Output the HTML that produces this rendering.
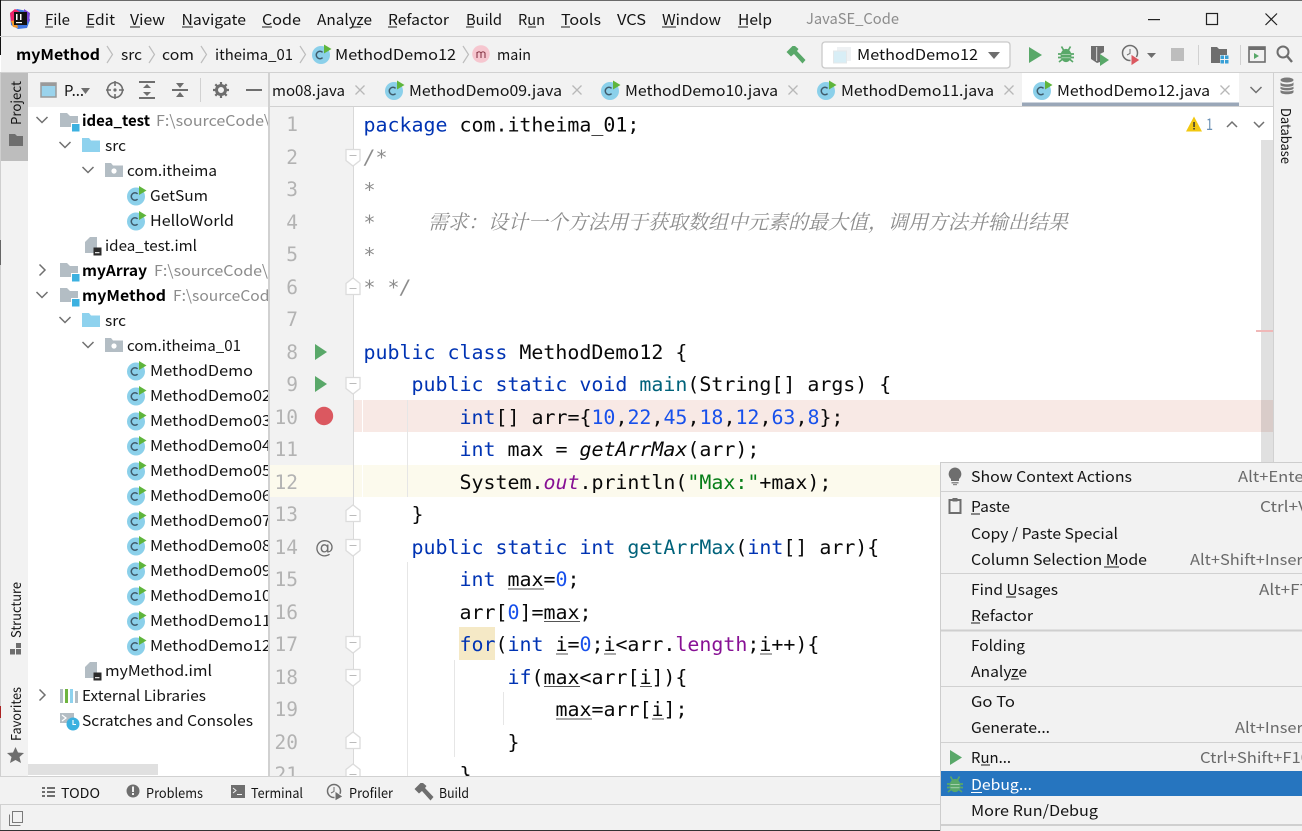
<!DOCTYPE html>
<html><head><meta charset="utf-8"><title>JavaSE_Code</title>
<style>
html,body{margin:0;padding:0;background:#f2f2f2;width:1302px;height:831px;overflow:hidden}
svg{display:block}
text{font-family:"Noto Sans CJK SC","Liberation Sans",sans-serif;font-size:15px;fill:#141414;white-space:pre}
.b{font-weight:700;fill:#000}
.g{fill:#8c8c8c}
.s{fill:#6a6a6a}
.sm{font-size:13.5px}
.c{font-family:"DejaVu Sans Mono","Liberation Mono",monospace;font-size:19.93px;fill:#080808}
.k{fill:#0033b3}.n{fill:#1750eb}.st{fill:#067d17}.f{fill:#871094}.d{fill:#00627a}.i{font-style:italic}.cm{fill:#8c8c8c;font-style:italic}
.ln{font-family:"DejaVu Sans Mono","Liberation Mono",monospace;font-size:19.5px;fill:#b3b3b3;text-anchor:end}
.cn{font-family:"Noto Serif CJK SC","Noto Sans CJK SC",serif;font-size:20px;font-style:italic;fill:#8c8c8c}
.ch{fill:none;stroke:#707070;stroke-width:1.5}
.nv{fill:none;stroke:#bdbdbd;stroke-width:1.2}
.x{fill:none;stroke:#b8b8b8;stroke-width:1.3}
.u{fill:#1c1c1c}
.vu{fill:#555}
.gd{fill:#e6e6e6}
</style></head><body>
<svg width="1302" height="831" viewBox="0 0 1302 831" xmlns="http://www.w3.org/2000/svg">
<defs>
<g id="ci"><circle cx="0" cy="0" r="9" fill="#8bd0ea"/><path d="M1.6,-2.6A3.7,3.7 0 1 0 1.6,2.6" fill="none" stroke="#3f5b6b" stroke-width="1.5"/><path d="M3,-10.5L10.5,-6L3,-1.5Z" fill="#5fb53c"/></g>
<g id="mod"><path d="M0,0H7L10,3H18V14H0Z" fill="#b3bdc4"/><rect x="12" y="11" width="7.5" height="7.5" fill="#3cb1e0"/><rect x="11" y="10" width="1" height="8.5" fill="#fff"/><rect x="11" y="10" width="8.5" height="1" fill="#fff"/></g>
<g id="src"><path d="M0,0H7L9,2.5H18V14H0Z" fill="#8ed2ee"/></g>
<g id="pkg"><path d="M0,0H6L8,2.5H18V14H0Z" fill="#b3bdc4"/><circle cx="9" cy="8" r="2.6" fill="#fff"/></g>
<g id="iml"><path d="M0,5L5,0H12V16H0Z" fill="#b3bdc4"/><rect x="8.5" y="10.5" width="8" height="8" fill="#2b2b2b"/><rect x="10" y="15" width="4.5" height="1.3" fill="#ddd"/></g>
<g id="dn"><path class="ch" d="M-5.5,-3L0,2.5L5.5,-3"/></g>
<g id="rt"><path class="ch" d="M-2.5,-5.5L3,0L-2.5,5.5"/></g>
<g id="nv"><path class="nv" d="M0,0L5.5,8.5L0,17"/></g>
<g id="x"><path class="x" d="M-4.5,-4.5L4.5,4.5M4.5,-4.5L-4.5,4.5"/></g>
<g id="fd"><path d="M-7,-7.5H7V3.5L0,9L-7,3.5Z" fill="#fff" stroke="#dcdcdc" stroke-width="1.3"/><rect x="-3.5" y="-2" width="7" height="1" fill="#bbb"/></g>
<g id="fu"><path d="M-7,7.5H7V-3.5L0,-9L-7,-3.5Z" fill="#fff" stroke="#dcdcdc" stroke-width="1.3"/><rect x="-3.5" y="1" width="7" height="1" fill="#bbb"/></g>
<g id="run"><path d="M0,0L12,8L0,16Z" fill="#59a869"/></g>
<g id="bug"><path d="M-4.5,-7.5L-2.5,-4M4.5,-7.5L2.5,-4M-8,0H-4M4,0H8M-8,3.5H-4M4,3.5H8M-7,8L-4,5.5M7,8L4,5.5" stroke="currentColor" stroke-width="1.7" fill="none"/><ellipse cx="0" cy="1.5" rx="5.4" ry="6.6" fill="currentColor"/><rect x="-4.5" y="0" width="9" height="1" fill="#dfeee2" opacity=".55"/><rect x="-4.5" y="3.2" width="9" height="1" fill="#dfeee2" opacity=".55"/></g>
<g id="ham"><path d="M-8.5,-3L-2.5,-9L0,-9L3.5,-6L2,-4L10.5,5L7.5,8.5L-1,-1L-4,1.500Z" fill="currentColor"/></g>
<clipPath id="tc"><rect x="28" y="107" width="240" height="669"/></clipPath>
<clipPath id="tb"><rect x="270" y="73" width="1003" height="33"/></clipPath>
<clipPath id="mc"><rect x="941" y="463" width="361" height="368"/></clipPath>
</defs>

<rect width="1302" height="831" fill="#f2f2f2"/>
<!-- title -->
<rect x="0" y="0" width="1302" height="1" fill="#6a6a6a"/>
<rect x="0" y="0" width="1" height="55" fill="#111"/>
<g>
<path d="M10,13L17,9L27,11L30,20L27,28L18,29L11,25Z" fill="#3e74e0"/>
<path d="M10,13L15,9L20,12L17,20L11,22Z" fill="#f0246a"/>
<path d="M24,9L30,13L29,22L24,20Z" fill="#7a46d8"/>
<path d="M11,21L16,20L18,28L13,27Z" fill="#f59a2a"/>
<rect x="14" y="12" width="13" height="13" fill="#111"/>
<rect x="16" y="22" width="6" height="1.2" fill="#fff"/>
<rect x="16" y="14" width="1.5" height="6" fill="#fff"/>
<rect x="20" y="14" width="1.5" height="6" fill="#fff"/>
</g>
<text x="45" y="25" textLength="25" lengthAdjust="spacingAndGlyphs">File</text><rect class="u" x="45" y="26.5" width="8" height="1"/>
<text x="86" y="25" textLength="29" lengthAdjust="spacingAndGlyphs">Edit</text><rect class="u" x="86" y="26.5" width="8" height="1"/>
<text x="130" y="25" textLength="35" lengthAdjust="spacingAndGlyphs">View</text><rect class="u" x="130" y="26.5" width="10" height="1"/>
<text x="181.500" y="25" textLength="64.500" lengthAdjust="spacingAndGlyphs">Navigate</text><rect class="u" x="182" y="26.5" width="11" height="1"/>
<text x="262" y="25" textLength="39" lengthAdjust="spacingAndGlyphs">Code</text><rect class="u" x="262" y="26.5" width="10" height="1"/>
<text x="317" y="25" textLength="55" lengthAdjust="spacingAndGlyphs">Analyze</text><rect class="u" x="352" y="26.5" width="9" height="1"/>
<text x="388" y="25" textLength="61" lengthAdjust="spacingAndGlyphs">Refactor</text><rect class="u" x="388" y="26.5" width="9" height="1"/>
<text x="466" y="25" textLength="36" lengthAdjust="spacingAndGlyphs">Build</text><rect class="u" x="466" y="26.5" width="8" height="1"/>
<text x="518" y="25" textLength="27" lengthAdjust="spacingAndGlyphs">Run</text><rect class="u" x="528" y="26.5" width="8" height="1"/>
<text x="561" y="25" textLength="40" lengthAdjust="spacingAndGlyphs">Tools</text><rect class="u" x="561" y="26.5" width="9" height="1"/>
<text x="617" y="25" textLength="29" lengthAdjust="spacingAndGlyphs">VCS</text>
<text x="662" y="25" textLength="59" lengthAdjust="spacingAndGlyphs">Window</text><rect class="u" x="662" y="26.5" width="14" height="1"/>
<text x="738" y="25" textLength="34" lengthAdjust="spacingAndGlyphs">Help</text><rect class="u" x="738" y="26.5" width="10" height="1"/>
<text class="g" x="806" y="24" textLength="93" lengthAdjust="spacingAndGlyphs">JavaSE_Code</text>
<rect x="1148" y="19" width="12" height="1.2" fill="#222"/>
<rect x="1206.5" y="13.5" width="11" height="11" fill="none" stroke="#222" stroke-width="1.2"/>
<path d="M1265.5,13.5L1277,25M1277,13.5L1265.5,25" stroke="#222" stroke-width="1.2" fill="none"/>
<rect x="0" y="36" width="1302" height="1" fill="#d1d1d1"/>

<!-- nav -->
<rect x="0" y="55" width="1" height="17" fill="#fff"/>
<text class="b" x="16" y="60" textLength="84" lengthAdjust="spacingAndGlyphs">myMethod</text>
<use href="#nv" x="107" y="46"/>
<text x="121" y="60" textLength="21" lengthAdjust="spacingAndGlyphs">src</text>
<use href="#nv" x="149" y="46"/>
<text x="162" y="60" textLength="32" lengthAdjust="spacingAndGlyphs">com</text>
<use href="#nv" x="201" y="46"/>
<text x="215" y="60" textLength="78" lengthAdjust="spacingAndGlyphs">itheima_01</text>
<use href="#nv" x="300" y="46"/>
<use href="#ci" x="321" y="55"/>
<text x="335" y="60" textLength="121" lengthAdjust="spacingAndGlyphs">MethodDemo12</text>
<use href="#nv" x="463" y="46"/>
<circle cx="481" cy="54" r="8.8" fill="#f6c6cf"/><path d="M477,58V52M477,53Q479,50.500 481,53V58M481,53Q483,50.500 485,53V58" fill="none" stroke="#8a3a4a" stroke-width="1.1"/>
<text x="497" y="60" textLength="34" lengthAdjust="spacingAndGlyphs">main</text>

<use href="#ham" x="795" y="55" style="color:#59a869"/>
<rect x="822" y="42" width="188" height="26" rx="3" fill="#fff" stroke="#c9c9c9" stroke-width="1.3"/>
<rect x="837" y="47" width="14" height="14" fill="#eef1f3"/><rect x="833.500" y="51" width="13" height="12" fill="#d8eef6" stroke="#e4e8ea"/>
<text x="857" y="60" textLength="121" lengthAdjust="spacingAndGlyphs">MethodDemo12</text>
<path d="M988,52H1000L994,59Z" fill="#6e6e6e"/>
<path d="M1029,47L1042,55L1029,63Z" fill="#59a869"/>
<use href="#bug" x="1066" y="54" style="color:#59a869"/>
<path d="M1091,46H1104V52L1100,54V62L1097,63L1091,59Z" fill="#6e6e6e"/><rect x="1096" y="47" width="1.200" height="14" fill="#f2f2f2" opacity=".7"/><path d="M1100,54L1109,60L1100,66Z" fill="#59a869"/>
<circle cx="1130" cy="53" r="7.500" fill="none" stroke="#6e6e6e" stroke-width="1.5"/><path d="M1130,49V53.500L1127,55" stroke="#6e6e6e" fill="none"/><path d="M1131,54L1140,60L1131,66Z" fill="#db5860" stroke="#f2f2f2"/>
<path d="M1147,53H1156L1151.500,58Z" fill="#6e6e6e"/>
<rect x="1171" y="48" width="13" height="13" fill="#bdbdbd"/>
<rect x="1198" y="45" width="1" height="20" fill="#d1d1d1"/>
<path d="M1211,47H1217L1219,49H1227V63H1211Z" fill="#6e6e6e"/><rect x="1220" y="55" width="9" height="9" fill="#f2f2f2"/><rect x="1220.500" y="55.500" width="3.500" height="3.500" fill="#389fd6"/><rect x="1225" y="55.500" width="3.500" height="3.500" fill="#389fd6"/><rect x="1220.500" y="60" width="3.500" height="3.500" fill="#389fd6"/><rect x="1225" y="60" width="3.500" height="3.500" fill="#389fd6"/>
<rect x="1240" y="45" width="1" height="20" fill="#d1d1d1"/>
<rect x="1249" y="47" width="16" height="15" fill="none" stroke="#6e6e6e" stroke-width="1.6"/><rect x="1249" y="47" width="16" height="3" fill="#6e6e6e"/><path d="M1254,53L1259,56L1254,59Z" fill="#59a869"/>
<circle cx="1283" cy="52" r="5.500" fill="none" stroke="#6e6e6e" stroke-width="2"/><path d="M1287,56L1292,62" stroke="#6e6e6e" stroke-width="2.400"/>
<rect x="0" y="72" width="1302" height="1" fill="#d1d1d1"/>

<!-- left strip -->
<rect x="1" y="73" width="27" height="88" fill="#bdbdbd"/>
<rect x="0" y="73" width="1" height="758" fill="#cfcfcf"/>
<text class="sm" transform="translate(21,125) rotate(-90)" textLength="44" lengthAdjust="spacingAndGlyphs">Project</text>
<path d="M9,134H15L17,136H23V146H9Z" fill="#6e6e6e"/>
<rect x="0" y="240" width="1" height="25" fill="#666"/>
<rect x="0" y="706" width="1" height="12" fill="#a22"/>
<text class="sm" transform="translate(21,638) rotate(-90)" textLength="56" lengthAdjust="spacingAndGlyphs">Structure</text>
<rect x="10" y="649" width="5" height="5.500" fill="#6e6e6e"/><rect x="16" y="649" width="5" height="5.500" fill="#6e6e6e"/><rect x="16" y="643" width="5" height="5" fill="#6e6e6e"/>
<text class="sm" transform="translate(21,741) rotate(-90)" textLength="54" lengthAdjust="spacingAndGlyphs">Favorites</text>
<path d="M15.500,747L18,752.500L24,753L19.500,757L21,763L15.500,760L10,763L11.500,757L7,753L13,752.500Z" fill="#6e6e6e"/>

<!-- project toolbar -->
<rect x="41" y="83" width="15" height="14" fill="#9ad3ec" stroke="#9a9a9a" stroke-width="1.500"/><rect x="41" y="83" width="15" height="3" fill="#9a9a9a"/>
<text x="64" y="96" textLength="20" lengthAdjust="spacingAndGlyphs">P...</text>
<path d="M81,88H90L85.500,94Z" fill="#6e6e6e"/>
<circle cx="115" cy="90" r="7.500" fill="none" stroke="#6e6e6e" stroke-width="1.600"/><circle cx="115" cy="90" r="1.600" fill="#6e6e6e"/><path d="M115,81V86M115,94V99M106,90H111M119,90H124" stroke="#6e6e6e" stroke-width="1.600"/>
<path d="M139,82H155M139,98H155" stroke="#6e6e6e" stroke-width="2"/><path d="M147,84L151,88H143ZM147,96L151,92H143Z" fill="#6e6e6e"/>
<path d="M172,90H188" stroke="#6e6e6e" stroke-width="2"/><path d="M180,88L184,83H176ZM180,92L184,97H176Z" fill="#6e6e6e"/>
<rect x="200" y="78" width="1" height="24" fill="#d1d1d1"/>
<circle cx="221" cy="90" r="4.500" fill="none" stroke="#6e6e6e" stroke-width="3"/><path d="M221,82V85M221,95V98M213,90H216M226,90H229M215.300,84.300L217.500,86.500M224.500,93.500L226.700,95.700M226.700,84.300L224.500,86.500M217.500,93.500L215.300,95.700" stroke="#6e6e6e" stroke-width="2.200"/>
<rect x="246" y="89" width="16" height="2" fill="#6e6e6e"/>

<!-- tree -->
<rect x="28" y="107" width="241" height="669" fill="#fff"/>
<rect x="28" y="73" width="1" height="34" fill="#f2f2f2"/>
<g clip-path="url(#tc)">
<use href="#dn" x="42" y="120"/><use href="#mod" x="60" y="113"/>
<text class="b" x="82" y="126" textLength="68" lengthAdjust="spacingAndGlyphs">idea_test</text>
<text class="g" x="156" y="126" textLength="114" lengthAdjust="spacingAndGlyphs">F:\sourceCode\</text>
<use href="#dn" x="65" y="145"/><use href="#src" x="82" y="138"/>
<text x="105" y="151" textLength="21" lengthAdjust="spacingAndGlyphs">src</text>
<use href="#dn" x="88" y="170"/><use href="#pkg" x="105" y="163"/>
<text x="127" y="176" textLength="90" lengthAdjust="spacingAndGlyphs">com.itheima</text>
<use href="#ci" x="136" y="196.500"/><text x="150" y="201" textLength="58" lengthAdjust="spacingAndGlyphs">GetSum</text>
<use href="#ci" x="136" y="221.500"/><text x="150" y="226" textLength="84" lengthAdjust="spacingAndGlyphs">HelloWorld</text>
<use href="#iml" x="85" y="237"/><text x="105" y="251" textLength="92" lengthAdjust="spacingAndGlyphs">idea_test.iml</text>
<use href="#rt" x="42" y="270"/><use href="#mod" x="60" y="263"/>
<text class="b" x="82" y="276" textLength="65" lengthAdjust="spacingAndGlyphs">myArray</text>
<text class="g" x="154" y="276" textLength="114" lengthAdjust="spacingAndGlyphs">F:\sourceCode\</text>
<use href="#dn" x="42" y="295"/><use href="#mod" x="60" y="288"/>
<text class="b" x="82" y="301" textLength="84" lengthAdjust="spacingAndGlyphs">myMethod</text>
<text class="g" x="173" y="301" textLength="105" lengthAdjust="spacingAndGlyphs">F:\sourceCode</text>
<use href="#dn" x="65" y="320"/><use href="#src" x="82" y="313"/>
<text x="105" y="326" textLength="21" lengthAdjust="spacingAndGlyphs">src</text>
<use href="#dn" x="88" y="345"/><use href="#pkg" x="105" y="338"/>
<text x="127" y="351" textLength="114" lengthAdjust="spacingAndGlyphs">com.itheima_01</text>
<use href="#ci" x="136" y="371.500"/><text x="150" y="376" textLength="103" lengthAdjust="spacingAndGlyphs">MethodDemo</text>
<use href="#ci" x="136" y="396.500"/><text x="150" y="401" textLength="121" lengthAdjust="spacingAndGlyphs">MethodDemo02</text>
<use href="#ci" x="136" y="421.500"/><text x="150" y="426" textLength="121" lengthAdjust="spacingAndGlyphs">MethodDemo03</text>
<use href="#ci" x="136" y="446.500"/><text x="150" y="451" textLength="121" lengthAdjust="spacingAndGlyphs">MethodDemo04</text>
<use href="#ci" x="136" y="471.500"/><text x="150" y="476" textLength="121" lengthAdjust="spacingAndGlyphs">MethodDemo05</text>
<use href="#ci" x="136" y="496.500"/><text x="150" y="501" textLength="121" lengthAdjust="spacingAndGlyphs">MethodDemo06</text>
<use href="#ci" x="136" y="521.500"/><text x="150" y="526" textLength="121" lengthAdjust="spacingAndGlyphs">MethodDemo07</text>
<use href="#ci" x="136" y="546.500"/><text x="150" y="551" textLength="121" lengthAdjust="spacingAndGlyphs">MethodDemo08</text>
<use href="#ci" x="136" y="571.500"/><text x="150" y="576" textLength="121" lengthAdjust="spacingAndGlyphs">MethodDemo09</text>
<use href="#ci" x="136" y="596.500"/><text x="150" y="601" textLength="121" lengthAdjust="spacingAndGlyphs">MethodDemo10</text>
<use href="#ci" x="136" y="621.500"/><text x="150" y="626" textLength="121" lengthAdjust="spacingAndGlyphs">MethodDemo11</text>
<use href="#ci" x="136" y="646.500"/><text x="150" y="651" textLength="121" lengthAdjust="spacingAndGlyphs">MethodDemo12</text>
<use href="#iml" x="85" y="662"/><text x="105" y="676" textLength="107" lengthAdjust="spacingAndGlyphs">myMethod.iml</text>
<use href="#rt" x="42" y="695"/>
<rect x="60" y="689" width="3" height="14" fill="#b3bdc4"/><rect x="65" y="689" width="3" height="14" fill="#6fb43f"/><rect x="70" y="689" width="3" height="14" fill="#8ed2ee"/><rect x="75" y="691" width="3" height="12" fill="#b3bdc4"/>
<text x="82" y="701" textLength="124" lengthAdjust="spacingAndGlyphs">External Libraries</text>
<path d="M60,713H74V723H60Z" fill="#b3bdc4"/><path d="M62,715L66,718L62,721" stroke="#fff" fill="none" stroke-width="1.200"/><circle cx="73" cy="724" r="6.500" fill="#3cb1e0"/><path d="M73,720V724.500H76" stroke="#fff" fill="none" stroke-width="1.100"/>
<text x="82" y="726" textLength="171" lengthAdjust="spacingAndGlyphs">Scratches and Consoles</text>
<rect x="28" y="764" width="130" height="11" fill="#e0e0e0"/>
</g>
<rect x="268" y="73" width="2" height="703" fill="#d1d1d1"/>

<!-- tabs -->
<rect x="270" y="73" width="1003" height="33" fill="#f2f2f2"/>
<g clip-path="url(#tb)">
<text x="272" y="96" textLength="73" lengthAdjust="spacingAndGlyphs">mo08.java</text>
<use href="#x" x="360" y="90"/>
<use href="#ci" x="394" y="91"/><text x="409" y="96" textLength="153" lengthAdjust="spacingAndGlyphs">MethodDemo09.java</text><use href="#x" x="577" y="90"/>
<use href="#ci" x="610" y="91"/><text x="625" y="96" textLength="153" lengthAdjust="spacingAndGlyphs">MethodDemo10.java</text><use href="#x" x="793" y="90"/>
<use href="#ci" x="826" y="91"/><text x="841" y="96" textLength="153" lengthAdjust="spacingAndGlyphs">MethodDemo11.java</text><use href="#x" x="1009" y="90"/>
<rect x="1022" y="73" width="217" height="33" fill="#fff"/>
<rect x="1022" y="102.500" width="217" height="3.500" fill="#9aa7b8"/>
<use href="#ci" x="1042" y="91"/><text x="1057" y="96" textLength="153" lengthAdjust="spacingAndGlyphs">MethodDemo12.java</text><use href="#x" x="1225" y="90"/>
<use href="#dn" x="1256" y="90" />
</g>
<rect x="270" y="106" width="1003" height="1" fill="#d1d1d1"/>

<!-- editor -->
<rect x="270" y="107" width="83" height="669" fill="#f2f2f2"/>
<rect x="354" y="107" width="919" height="669" fill="#fff"/>
<rect x="354" y="400" width="919" height="32" fill="#f8e9e5"/>
<rect x="362" y="400" width="1" height="32" fill="#fff"/>
<rect x="270" y="465" width="671" height="32" fill="#fcfaed"/>
<rect x="362" y="465" width="1" height="32" fill="#fff"/>
<rect x="353" y="107" width="1" height="669" fill="#d9d9d9"/>
<rect x="407" y="400" width="1" height="97" class="gd"/>
<rect x="407" y="562" width="1" height="214" class="gd"/>
<rect x="454" y="660" width="1" height="97" class="gd"/>
<rect x="503" y="692" width="1" height="33" class="gd"/>
<rect x="459" y="627" width="36" height="33" fill="#f5e9c6"/>

<rect x="1261" y="140" width="12" height="636" fill="#000" opacity=".12"/>
<rect x="1256" y="330" width="17" height="2" fill="#f0b8b8"/>

<text class="ln" x="298" y="131">1</text><text class="ln" x="298" y="164">2</text><text class="ln" x="298" y="196">3</text><text class="ln" x="298" y="229">4</text><text class="ln" x="298" y="261">5</text><text class="ln" x="298" y="294">6</text><text class="ln" x="298" y="326">7</text><text class="ln" x="298" y="359">8</text><text class="ln" x="298" y="391">9</text><text class="ln" x="298" y="424">10</text><text class="ln" x="298" y="456">11</text><text class="ln" x="298" y="489">12</text><text class="ln" x="298" y="521">13</text><text class="ln" x="298" y="554">14</text><text class="ln" x="298" y="586">15</text><text class="ln" x="298" y="619">16</text><text class="ln" x="298" y="651">17</text><text class="ln" x="298" y="684">18</text><text class="ln" x="298" y="716">19</text><text class="ln" x="298" y="749">20</text><text class="ln" x="298" y="781">21</text>

<use href="#run" x="315" y="344"/><use href="#run" x="315" y="376"/>
<circle cx="324" cy="416" r="9.200" fill="#db5860"/>
<text x="315" y="553" style="font-family:'DejaVu Sans',sans-serif;font-size:19px;fill:#6e6e6e">@</text>
<use href="#fd" x="353" y="157"/><use href="#fu" x="353" y="287"/><use href="#fd" x="353" y="385"/><use href="#fu" x="353" y="514"/><use href="#fd" x="353" y="547"/><use href="#fd" x="353" y="644"/><use href="#fd" x="353" y="677"/><use href="#fu" x="353" y="741"/><use href="#fu" x="353" y="773"/>

<text class="c" x="363.500" y="131.500"><tspan class="k">package</tspan> com.itheima_01;</text>
<text class="c cm" x="363.500" y="164">/*</text>
<text class="c cm" x="363.500" y="196.500">*</text>
<text class="c cm" x="363.500" y="229">*</text>
<text class="cn" x="428" y="229" textLength="640">需求：设计一个方法用于获取数组中元素的最大值，调用方法并输出结果</text>
<text class="c cm" x="363.500" y="261.500">*</text>
<text class="c cm" x="363.500" y="294">* */</text>
<text class="c" x="363.500" y="359"><tspan class="k">public class</tspan> MethodDemo12 {</text>
<text class="c" x="411.500" y="391"><tspan class="k">public static void</tspan> <tspan class="d">main</tspan>(String[] args) {</text>
<text class="c" x="459.500" y="424"><tspan class="k">int</tspan>[] arr={<tspan class="n">10</tspan>,<tspan class="n">22</tspan>,<tspan class="n">45</tspan>,<tspan class="n">18</tspan>,<tspan class="n">12</tspan>,<tspan class="n">63</tspan>,<tspan class="n">8</tspan>};</text>
<text class="c" x="459.500" y="456"><tspan class="k">int</tspan> max = <tspan class="i">getArrMax</tspan>(arr);</text>
<text class="c" x="459.500" y="489"><tspan class="f" style="fill:#080808">System.</tspan><tspan class="f i">out</tspan>.println(<tspan class="st">"Max:"</tspan>+max);</text>
<text class="c" x="411.500" y="521">}</text>
<text class="c" x="411.500" y="554"><tspan class="k">public static int</tspan> <tspan class="d">getArrMax</tspan>(<tspan class="k">int</tspan>[] arr){</text>
<text class="c" x="459.500" y="586"><tspan class="k">int</tspan> max=<tspan class="n">0</tspan>;</text>
<text class="c" x="459.500" y="619"><tspan>arr[</tspan><tspan class="n">0</tspan>]=max;</text>
<text class="c" x="459.500" y="651"><tspan class="k">for</tspan>(<tspan class="k">int</tspan> i=<tspan class="n">0</tspan>;i&lt;arr.<tspan class="f">length</tspan>;i++){</text>
<text class="c" x="507.500" y="684"><tspan class="k">if</tspan>(max&lt;arr[i]){</text>
<text class="c" x="555.500" y="716">max=arr[i];</text>
<text class="c" x="507.500" y="749">}</text>
<text class="c" x="459.500" y="781">}</text>
<!-- reassigned underlines -->
<rect class="vu" x="508" y="588.500" width="36" height="1"/>
<rect class="vu" x="544" y="621" width="36" height="1"/>
<rect class="vu" x="556" y="653.500" width="12" height="1"/>
<rect class="vu" x="604" y="653.500" width="12" height="1"/>
<rect class="vu" x="760" y="653.500" width="12" height="1"/>
<rect class="vu" x="544" y="686" width="36" height="1"/>
<rect class="vu" x="640" y="686" width="12" height="1"/>
<rect class="vu" x="556" y="718.500" width="36" height="1"/>
<rect class="vu" x="652" y="718.500" width="12" height="1"/>

<path d="M1194,116.500L1202,131.500H1186Z" fill="#f2c811"/><rect x="1193.300" y="122" width="1.500" height="5" fill="#333"/><rect x="1193.300" y="128" width="1.500" height="1.500" fill="#333"/>
<text x="1206" y="130" style="font-size:16px;fill:#6a90b5" textLength="7" lengthAdjust="spacingAndGlyphs">1</text>
<path class="ch" d="M1227,127L1232,122L1237,127"/><path class="ch" d="M1254,122L1259,127L1264,122"/>

<!-- right strip -->
<rect x="1273" y="73" width="1" height="703" fill="#d1d1d1"/>
<ellipse cx="1287" cy="80" rx="6.500" ry="2.500" fill="#7a7a7a"/><path d="M1280.500,82V92C1280.500,95 1293.500,95 1293.500,92V82C1293.500,85 1280.500,85 1280.500,82Z" fill="#7a7a7a"/><path d="M1280.500,85.500C1280.500,88 1293.500,88 1293.500,85.500M1280.500,89C1280.500,91.500 1293.500,91.500 1293.500,89" stroke="#f2f2f2" fill="none"/>
<text class="sm" transform="translate(1281,108) rotate(90)" textLength="56" lengthAdjust="spacingAndGlyphs">Database</text>

<!-- bottom -->
<rect x="0" y="776" width="1302" height="29" fill="#f2f2f2"/>
<rect x="0" y="776" width="1302" height="1" fill="#d1d1d1"/>
<rect x="0" y="804" width="1302" height="1" fill="#d1d1d1"/>
<rect x="42" y="787" width="3" height="2" fill="#6e6e6e"/><rect x="42" y="791" width="3" height="2" fill="#6e6e6e"/><rect x="42" y="795" width="3" height="2" fill="#6e6e6e"/><rect x="47" y="787" width="8" height="2" fill="#6e6e6e"/><rect x="47" y="791" width="8" height="2" fill="#6e6e6e"/><rect x="47" y="795" width="8" height="2" fill="#6e6e6e"/>
<text class="sm" x="61" y="798" textLength="39" lengthAdjust="spacingAndGlyphs">TODO</text>
<circle cx="133" cy="791" r="6.500" fill="#6e6e6e"/><rect x="132" y="786.500" width="2" height="5.500" fill="#f2f2f2"/><rect x="132" y="793" width="2" height="2" fill="#f2f2f2"/>
<text class="sm" x="146" y="798" textLength="57" lengthAdjust="spacingAndGlyphs">Problems</text>
<rect x="231" y="785" width="14" height="13" fill="#6e6e6e"/><path d="M233,788L236,790.500L233,793" stroke="#f2f2f2" fill="none"/><rect x="237" y="794" width="5" height="1" fill="#f2f2f2"/>
<text class="sm" x="251" y="798" textLength="52" lengthAdjust="spacingAndGlyphs">Terminal</text>
<circle cx="334" cy="791" r="6.500" fill="none" stroke="#6e6e6e" stroke-width="1.500"/><path d="M334,787V791.500L331,793" stroke="#6e6e6e" fill="none"/><path d="M335,791L343,796.500L335,801Z" fill="#6e6e6e" stroke="#f2f2f2"/>
<text class="sm" x="349" y="798" textLength="44" lengthAdjust="spacingAndGlyphs">Profiler</text>
<use href="#ham" x="423" y="792" style="color:#6e6e6e"/>
<text class="sm" x="439" y="798" textLength="30" lengthAdjust="spacingAndGlyphs">Build</text>
<rect x="12.500" y="811.500" width="10" height="11" fill="none" stroke="#7a7a7a"/><path d="M9.500,814.500V825.500H20.500" fill="none" stroke="#7a7a7a"/>
<rect x="0" y="830" width="1302" height="1" fill="#333"/>

<!-- popup -->
<rect x="940" y="462" width="362" height="369" fill="#f2f2f2"/>
<rect x="940" y="462" width="362" height="1" fill="#cdcdcd"/>
<rect x="940" y="462" width="1" height="369" fill="#cdcdcd"/>
<rect x="941" y="491" width="361" height="1" fill="#d1d1d1"/>
<rect x="941" y="573" width="361" height="1" fill="#d1d1d1"/>
<rect x="941" y="629.500" width="361" height="2" fill="#cfcfcf"/>
<rect x="941" y="686" width="361" height="1" fill="#d1d1d1"/>
<rect x="941" y="742" width="361" height="1" fill="#d1d1d1"/>
<rect x="941" y="824" width="361" height="2" fill="#cfcfcf"/>
<rect x="941" y="771" width="361" height="25" fill="#2675bf"/>
<g clip-path="url(#mc)">
<path d="M955,467.500A6.500,6.500 0 0 1 959,479V481H951V479A6.500,6.500 0 0 1 955,467.500Z" fill="#6e6e6e"/><rect x="951.500" y="482" width="7" height="1.500" fill="#8a8a8a"/><rect x="953" y="484" width="4" height="1.200" fill="#8a8a8a"/>
<text x="971" y="482" textLength="161" lengthAdjust="spacingAndGlyphs">Show Context Actions</text>
<text class="s" x="1238" y="482" textLength="72" lengthAdjust="spacingAndGlyphs">Alt+Enter</text>
<rect x="949.500" y="500" width="11" height="13" fill="none" stroke="#6e6e6e" stroke-width="2"/><rect x="952.500" y="498" width="5" height="3.500" fill="#6e6e6e"/>
<text x="971" y="512" textLength="39" lengthAdjust="spacingAndGlyphs">Paste</text><rect class="u" x="971" y="513.500" width="9" height="1"/>
<text class="s" x="1260" y="512" textLength="48" lengthAdjust="spacingAndGlyphs">Ctrl+V</text>
<text x="971" y="539" textLength="147" lengthAdjust="spacingAndGlyphs">Copy / Paste Special</text>
<text x="971" y="565" textLength="176" lengthAdjust="spacingAndGlyphs">Column Selection Mode</text><rect class="u" x="1104" y="566.500" width="15" height="1"/>
<text class="s" x="1190" y="565" textLength="119" lengthAdjust="spacingAndGlyphs">Alt+Shift+Insert</text>
<text x="971" y="595" textLength="87" lengthAdjust="spacingAndGlyphs">Find Usages</text><rect class="u" x="1006" y="596.500" width="10" height="1"/>
<text class="s" x="1259" y="595" textLength="50" lengthAdjust="spacingAndGlyphs">Alt+F7</text>
<text x="971" y="621" textLength="62" lengthAdjust="spacingAndGlyphs">Refactor</text><rect class="u" x="971" y="622.500" width="9" height="1"/>
<text x="971" y="651" textLength="54" lengthAdjust="spacingAndGlyphs">Folding</text>
<text x="971" y="677" textLength="56" lengthAdjust="spacingAndGlyphs">Analyze</text><rect class="u" x="1011" y="678.500" width="8" height="1"/>
<text x="971" y="707" textLength="44" lengthAdjust="spacingAndGlyphs">Go To</text>
<text x="971" y="733" textLength="79" lengthAdjust="spacingAndGlyphs">Generate...</text>
<text class="s" x="1235" y="733" textLength="74" lengthAdjust="spacingAndGlyphs">Alt+Insert</text>
<path d="M950,750L962,757.500L950,765Z" fill="#59a869"/>
<text x="971" y="763" textLength="40" lengthAdjust="spacingAndGlyphs">Run...</text><rect class="u" x="981" y="764.500" width="9" height="1"/>
<text class="s" x="1200" y="763" textLength="110" lengthAdjust="spacingAndGlyphs">Ctrl+Shift+F10</text>
<use href="#bug" x="955" y="784" style="color:#59a869"/>
<text x="971" y="790" textLength="61" lengthAdjust="spacingAndGlyphs" style="fill:#fff">Debug...</text><rect x="971" y="792" width="11" height="1" fill="#fff"/>
<text x="971" y="816" textLength="127" lengthAdjust="spacingAndGlyphs">More Run/Debug</text>
</g>
</svg>
</body></html>
